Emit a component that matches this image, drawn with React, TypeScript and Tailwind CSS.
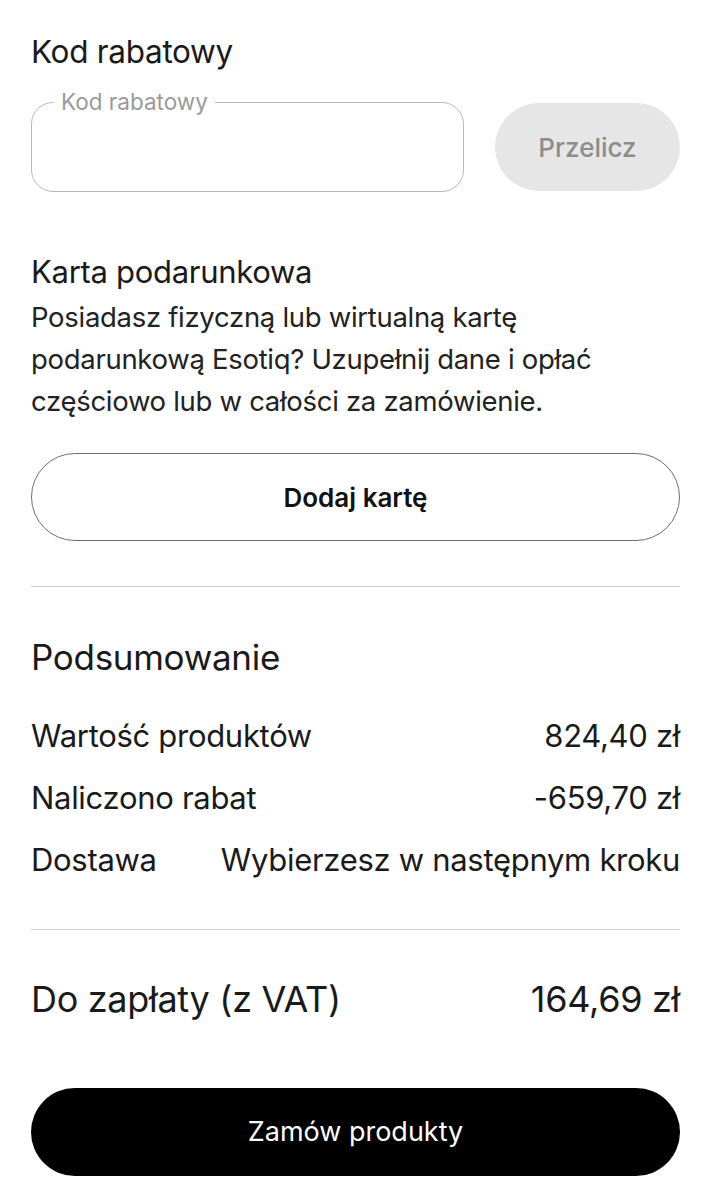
import React from 'react';

const rows = [
  { label: 'Wartość produktów', value: '824,40 zł' },
  { label: 'Naliczono rabat', value: '-659,70 zł' },
  { label: 'Dostawa', value: 'Wybierzesz w następnym kroku' },
];

export default function App() {
  return (
    <div className="min-h-screen bg-white px-[31px] pt-[34px] text-[#1a1a1a]" style={{ fontFamily: 'Inter, Roboto, "Liberation Sans", sans-serif' }}>
      {/* Kod rabatowy */}
      <h2 className="text-[31.5px] leading-[36px] tracking-[-0.3px]">Kod rabatowy</h2>
      <div className="mt-[32px] flex items-center gap-[31px]">
        <div className="relative h-[90px] flex-1 rounded-[22px] border border-[#b9b9b9]">
          <span className="absolute -top-[15px] left-[22px] bg-white px-[7px] text-[22.5px] leading-[28px] text-[#9a9a9a]">
            Kod rabatowy
          </span>
        </div>
        <button className="h-[88px] w-[185px] rounded-full bg-[#e6e6e6] text-[26px] font-medium text-[#8c8c8c]">
          Przelicz
        </button>
      </div>

      {/* Karta podarunkowa */}
      <h2 className="mt-[62px] text-[31px] leading-[36px] tracking-[-0.3px]">Karta podarunkowa</h2>
      <p className="mt-[6px] max-w-[600px] text-[27.5px] leading-[42px] tracking-[-0.3px] text-[#222]">
        Posiadasz fizyczną lub wirtualną kartę podarunkową Esotiq? Uzupełnij dane i opłać częściowo lub w całości za zamówienie.
      </p>
      <button className="mt-[31px] h-[88px] w-full rounded-full border-[1.5px] border-[#707070] text-[26px] font-semibold text-[#111]">
        Dodaj kartę
      </button>

      <div className="mt-[45px] h-px bg-[#cfcfcf]" />

      {/* Podsumowanie */}
      <h2 className="mt-[50px] text-[35px] leading-[40px] tracking-[-0.3px]">Podsumowanie</h2>
      <div className="mt-[28px] flex flex-col">
        {rows.map((r) => (
          <div key={r.label} className="flex h-[62px] items-center justify-between text-[31px] tracking-[-0.3px]">
            <span>{r.label}</span>
            <span>{r.value}</span>
          </div>
        ))}
      </div>

      <div className="mt-[38px] h-px bg-[#cfcfcf]" />

      <div className="mt-[47px] flex items-center justify-between text-[36px] leading-[44px] tracking-[-0.3px]">
        <span>Do zapłaty (z VAT)</span>
        <span>164,69 zł</span>
      </div>

      <button className="mt-[67px] h-[88px] w-full rounded-full bg-black text-[27px] text-white">
        Zamów produkty
      </button>
    </div>
  );
}
